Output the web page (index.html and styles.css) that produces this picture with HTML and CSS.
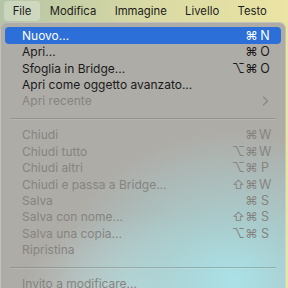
FILE: index.html
```html
<!DOCTYPE html>
<html lang="it">
<head>
<meta charset="utf-8">
<link rel="stylesheet" href="styles.css">
</head>
<body>
<div class="screen">
  <div class="menubar">
    <span class="mb-item active">File</span>
    <span class="mb-item">Modifica</span>
    <span class="mb-item">Immagine</span>
    <span class="mb-item">Livello</span>
    <span class="mb-item">Testo</span>
  </div>
  <div class="menu">
    <div class="row hl"><span class="label">Nuovo...</span><span class="sc"><span class="mod">⌘</span><span class="key">N</span></span></div>
    <div class="row"><span class="label">Apri...</span><span class="sc"><span class="mod">⌘</span><span class="key">O</span></span></div>
    <div class="row"><span class="label">Sfoglia in Bridge...</span><span class="sc"><span class="mod">⌥</span><span class="mod">⌘</span><span class="key">O</span></span></div>
    <div class="row"><span class="label">Apri come oggetto avanzato...</span></div>
    <div class="row dis"><span class="label">Apri recente</span><span class="chev"><svg width="7" height="10" viewBox="0 0 7 10"><path d="M1.5 1 L5.5 5 L1.5 9" fill="none" stroke="currentColor" stroke-width="1.4" stroke-linecap="round" stroke-linejoin="round"/></svg></span></div>
    <div class="sep"></div>
    <div class="row dis"><span class="label">Chiudi</span><span class="sc"><span class="mod">⌘</span><span class="key">W</span></span></div>
    <div class="row dis"><span class="label">Chiudi tutto</span><span class="sc"><span class="mod">⌥</span><span class="mod">⌘</span><span class="key">W</span></span></div>
    <div class="row dis"><span class="label">Chiudi altri</span><span class="sc"><span class="mod">⌥</span><span class="mod">⌘</span><span class="key">P</span></span></div>
    <div class="row dis"><span class="label">Chiudi e passa a Bridge...</span><span class="sc"><span class="mod">⇧</span><span class="mod">⌘</span><span class="key">W</span></span></div>
    <div class="row dis"><span class="label">Salva</span><span class="sc"><span class="mod">⌘</span><span class="key">S</span></span></div>
    <div class="row dis"><span class="label">Salva con nome...</span><span class="sc"><span class="mod">⇧</span><span class="mod">⌘</span><span class="key">S</span></span></div>
    <div class="row dis"><span class="label">Salva una copia...</span><span class="sc"><span class="mod">⌥</span><span class="mod">⌘</span><span class="key">S</span></span></div>
    <div class="row dis"><span class="label">Ripristina</span></div>
    <div class="sep"></div>
    <div class="row dis"><span class="label">Invito a modificare...</span></div>
  </div>
</div>
</body>
</html>
```
FILE: styles.css
```css
html, body {
  margin: 0;
  padding: 0;
}
body {
  width: 288px;
  height: 288px;
  overflow: hidden;
  font-family: Inter, "Noto Sans", "DejaVu Sans", sans-serif;
  font-size: 12px;
  background: #b6c2a8;
}
.screen {
  width: 288px;
  height: 288px;
  display: flex;
  flex-direction: column;
  background: linear-gradient(90deg, #b4c4a6 0%, #d8d9a4 50%, #ebe4a4 100%);
}
.menubar {
  height: 22px;
  flex: none;
  display: flex;
  align-items: stretch;
  gap: 1px;
  padding-left: 4px;
  color: #1c1c1a;
  font-size: 11.3px;
  white-space: nowrap;
}
.mb-item {
  display: flex;
  align-items: center;
  padding: 0 8.7px;
}
.mb-item.active {
  background: rgba(255, 255, 255, 0.28);
  border-radius: 4px;
  margin: 1px 0;
}
.menu {
  flex: 1;
  margin: 0 2px 0 0;
  padding: 5px 5px 0 5px;
  border-radius: 7px 7px 0 0;
  box-shadow: inset 0 0 0 1px rgba(255, 255, 255, 0.25);
  background:
    radial-gradient(ellipse 180px 150px at 82% 96%, rgba(170, 226, 232, 1) 0%, rgba(168, 214, 216, 0.75) 40%, rgba(172, 200, 198, 0) 100%),
    radial-gradient(ellipse 120px 80px at 50% 100%, rgba(200, 230, 232, 0.7) 0%, rgba(200, 230, 232, 0) 100%),
    #aeaca7;
  color: #1a1a1a;
  display: flex;
  flex-direction: column;
}
.row {
  height: 16.4px;
  flex: none;
  display: flex;
  align-items: center;
  justify-content: space-between;
  padding: 0 10px 0 17px;
  border-radius: 4px;
  white-space: nowrap;
  line-height: 16px;
}
.row.hl {
  height: 17px;
  background: #2c6fd8;
  color: #ffffff;
}
.row.dis {
  color: #86847f;
}
.sc {
  display: flex;
  align-items: center;
  font-size: 12.5px;
}
.mod {
  width: 13px;
  text-align: center;
}
.key {
  width: 12px;
  text-align: center;
  margin-left: 1px;
}
.chev {
  display: flex;
  align-items: center;
  color: #8c8a86;
  padding-right: 2px;
}
.sep {
  height: 17.6px;
  flex: none;
  display: flex;
  align-items: center;
  padding: 0 5px;
}
.sep::before {
  content: "";
  flex: 1;
  height: 1px;
  background: rgba(100, 100, 96, 0.35);
  box-shadow: 0 1px 0 rgba(255, 255, 255, 0.12);
}
```
